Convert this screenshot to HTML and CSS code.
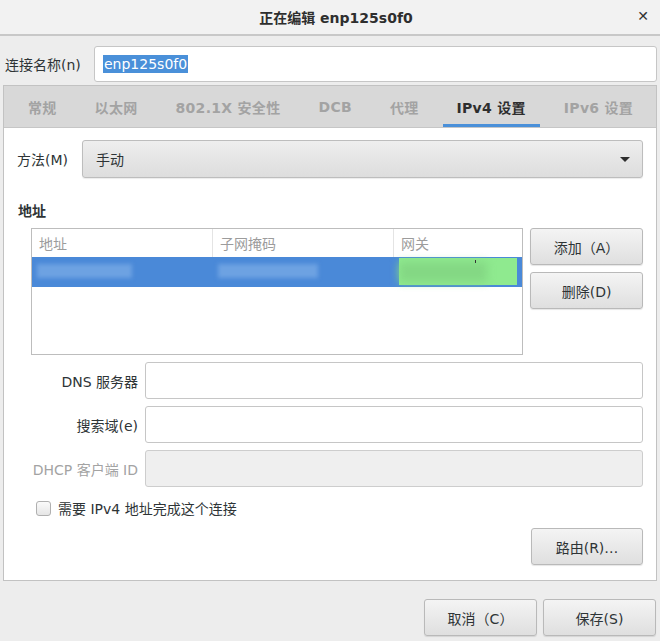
FILE: index.html
```html
<!DOCTYPE html>
<html>
<head>
<meta charset="utf-8">
<link rel="stylesheet" href="styles.css">
</head>
<body>
<div class="window">
  <div class="titlebar">
    <span class="title">正在编辑 enp125s0f0</span>
    <span class="close">✕</span>
  </div>
  <div class="name-row">
    <span class="name-label">连接名称(n)</span>
    <div class="entry name-entry"><span class="sel">enp125s0f0</span></div>
  </div>
  <div class="notebook">
    <div class="tabs">
      <span class="tab">常规</span>
      <span class="tab">以太网</span>
      <span class="tab">802.1X 安全性</span>
      <span class="tab">DCB</span>
      <span class="tab">代理</span>
      <span class="tab active">IPv4 设置</span>
      <span class="tab">IPv6 设置</span>
    </div>
    <div class="page">
      <div class="method-row">
        <span class="method-label">方法(M)</span>
        <div class="combo"><span>手动</span><span class="arrow"></span></div>
      </div>
      <div class="section-title">地址</div>
      <div class="addr-area">
        <div class="table">
          <div class="thead">
            <span class="c1">地址</span>
            <span class="c2">子网掩码</span>
            <span class="c3">网关</span>
          </div>
          <div class="trow">
            <span class="c1"><i class="blur b1"></i></span>
            <span class="c2"><i class="blur b2"></i></span>
            <span class="c3 green"><i class="gblur"></i><i class="tick"></i></span>
          </div>
        </div>
        <div class="side-btns">
          <div class="btn">添加（A）</div>
          <div class="btn">删除(D)</div>
        </div>
      </div>
      <div class="form">
        <span class="flabel">DNS 服务器</span>
        <div class="entry"></div>
        <span class="flabel">搜索域(e)</span>
        <div class="entry"></div>
        <span class="flabel dim">DHCP 客户端 ID</span>
        <div class="entry disabled"></div>
      </div>
      <label class="check-row"><span class="checkbox"></span><span>需要 IPv4 地址完成这个连接</span></label>
      <div class="route-row"><div class="btn route">路由(R)…</div></div>
    </div>
  </div>
  <div class="actions">
    <div class="btn act">取消（C）</div>
    <div class="btn act">保存(S)</div>
  </div>
</div>
</body>
</html>
```
FILE: styles.css
```css
* { box-sizing: border-box; }
html, body { margin: 0; padding: 0; }
body {
  width: 660px;
  height: 641px;
  overflow: hidden;
  background: #ededed;
  font-family: "DejaVu Sans", "Noto Sans CJK SC", sans-serif;
  font-size: 14px;
  color: #2e3436;
}
.window { width: 660px; height: 641px; display: flex; flex-direction: column; }
.titlebar {
  height: 36px;
  flex: none;
  background: #f2f2f2;
  border-bottom: 2px solid #c8c8c8;
  position: relative;
  display: flex;
  align-items: center;
  justify-content: center;
}
.title { font-weight: bold; font-size: 14px; color: #2e2e2e; padding-left: 12px; }
.close {
  position: absolute;
  right: 11px;
  top: 8px;
  font-size: 14px;
  font-weight: bold;
  color: #333;
}
.name-row {
  display: flex;
  align-items: center;
  padding: 7px 3px 0 5px;
  height: 49px;
  flex: none;
}
.name-label { width: 89px; color: #2e3436; }
.entry {
  height: 37px;
  background: #fff;
  border: 1px solid #c6c6c6;
  border-radius: 3px;
}
.name-entry { flex: 1; display: flex; align-items: center; padding-left: 8px; height: 36px; }
.sel { background: #4a90d9; color: #fff; padding: 1px 1px; }
.notebook {
  margin: 0 3px;
  height: 496px;
  flex: none;
  border: 1px solid #c2c2c2;
  background: #fff;
  display: flex;
  flex-direction: column;
}
.tabs {
  height: 42px;
  flex: none;
  background: #d8d8d8;
  border-bottom: 1px solid #c6c6c6;
  display: flex;
  gap: 10px;
  padding-left: 10px;
}
.tab {
  padding: 0 14px;
  display: flex;
  align-items: center;
  font-weight: bold;
  color: #a3a3a3;
  font-size: 14px;
  letter-spacing: 0.3px;
  border-bottom: 3px solid transparent;
  padding-top: 3px;
}
.tab.active { color: #2e2e2e; border-bottom-color: #4a90d9; }
.page { flex: 1; padding: 12px 13px 0 13px; display: flex; flex-direction: column; }
.method-row { display: flex; align-items: center; }
.method-label { width: 65px; }
.combo {
  flex: 1;
  height: 38px;
  border: 1px solid #bdbdbd;
  border-radius: 3px;
  background: linear-gradient(#eeeeee, #dddddd);
  box-shadow: 0 1px 1px rgba(0,0,0,0.08);
  display: flex;
  align-items: center;
  justify-content: space-between;
  padding: 0 12px 0 13px;
}
.arrow {
  width: 0; height: 0;
  border-left: 5px solid transparent;
  border-right: 5px solid transparent;
  border-top: 5px solid #2e2e2e;
}
.section-title { font-weight: bold; margin-top: 22px; margin-left: 1px; height: 20px; }
.addr-area { display: flex; gap: 7px; margin-left: 14px; margin-top: 8px; }
.table {
  width: 493px;
  height: 127px;
  border: 1px solid #bdbdbd;
}
.thead, .trow { display: flex; }
.thead { height: 28px; }
.thead span {
  display: flex; align-items: center; padding-left: 7px;
  color: #9c9c9c; border-right: 1px solid #e4e4e4;
}
.thead span:last-child { border-right: none; }
.c1 { width: 181px; }
.c2 { width: 181px; }
.c3 { flex: 1; }
.trow { height: 30px; background: #4a89d8; }
.trow span { position: relative; }
.blur {
  position: absolute;
  top: 7px;
  height: 14px;
  background: #6da2e2;
  filter: blur(2px);
}
.b1 { left: 5px; width: 95px; }
.b2 { left: 5px; width: 100px; }
.green { background: #8fea8f; margin: 1px 5px 2px 5px; }
.gblur {
  position: absolute; left: 0; right: 30px; top: 4px; height: 20px;
  background: #84d884; filter: blur(4px);
}
.tick { position: absolute; left: 76px; top: 2px; width: 1px; height: 3px; background: #333; }
.side-btns { display: flex; flex-direction: column; gap: 7px; width: 113px; }
.btn {
  height: 37px;
  border: 1px solid #b9b9b9;
  border-radius: 3px;
  background: linear-gradient(#f4f4f4, #dfdfdf);
  box-shadow: 0 1px 1px rgba(0,0,0,0.1);
  display: flex; align-items: center; justify-content: center;
  color: #2e3436;
}
.form {
  display: grid;
  grid-template-columns: 121px 1fr;
  column-gap: 7px;
  row-gap: 7px;
  align-items: center;
  margin-top: 7px;
}
.flabel { text-align: right; }
.flabel.dim { color: #a3a3a3; }
.entry.disabled { background: #efefef; border-color: #cdcdcd; }
.check-row { display: flex; align-items: center; gap: 7px; margin: 10px 0 0 19px; height: 22px; }
.checkbox {
  width: 15px; height: 15px;
  border: 1px solid #b0b0b0;
  border-radius: 3px;
  background: linear-gradient(#fafafa, #e6e6e6);
}
.route-row { display: flex; justify-content: flex-end; margin-top: 9px; }
.route { width: 112px; }
.actions { display: flex; justify-content: flex-end; gap: 6px; padding: 18px 4px 0 0; }
.act { width: 113px; }
```
